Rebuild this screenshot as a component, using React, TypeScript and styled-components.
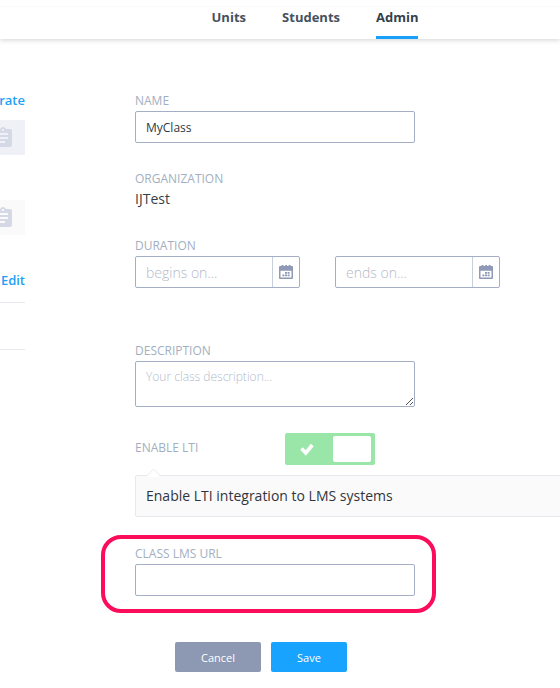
import React from "react";
import styled, { createGlobalStyle } from "styled-components";

const GlobalStyle = createGlobalStyle`
  * { box-sizing: border-box; }
  body { margin: 0; background: #fff; overflow: hidden; }
  body, input, textarea, button { font-family: "Open Sans", "Noto Sans", sans-serif; }
`;

const Page = styled.div`
  width: 560px;
  height: 688px;
  overflow: hidden;
  color: #373f49;
`;

const Header = styled.header`
  height: 39px;
  padding-top: 6px;
  background: linear-gradient(#fafafa, #fafafa) 0 6px / 100% 1px no-repeat #fff;
  box-shadow: 0 1px 5px rgba(0, 0, 0, 0.18);
`;

const Nav = styled.nav`
  display: flex;
  gap: 36px;
  padding-left: 211px;
`;

const NavItem = styled.a<{ $active?: boolean; $width: number }>`
  width: ${(p) => p.$width}px;
  height: 33px;
  border-bottom: 3px solid ${(p) => (p.$active ? "#18a0fb" : "transparent")};
  font-size: 13px;
  font-weight: 700;
  line-height: 23px;
  text-align: right;
  white-space: nowrap;
  color: ${(p) => (p.$active ? "#333f4d" : "#46515e")};
`;

const Body = styled.div`
  display: flex;
`;

const Sidebar = styled.aside`
  flex: none;
  width: 25px;
  height: 649px;
  overflow: hidden;
  padding-top: 51px;
`;

const SideLink = styled.a`
  display: flex;
  justify-content: flex-end;
  height: 20px;
  line-height: 20px;
  font-size: 13px;
  font-weight: 600;
  color: #229ff5;
`;

const Tile = styled.div<{ $active?: boolean }>`
  display: flex;
  height: 35px;
  margin-top: ${(p) => (p.$active ? 10 : 45)}px;
  padding-top: 7px;
  background: ${(p) => (p.$active ? "#f0f1f6" : "#fafafa")};
  svg { flex: none; margin-left: -6px; }
`;

const EditArea = styled.div`
  padding-top: 35px;
`;

const Rule = styled.hr<{ $gap: number }>`
  height: 1px;
  margin: ${(p) => p.$gap}px 0 0;
  border: 0;
  background: #e9eaf0;
`;

const Form = styled.form`
  flex: none;
  width: 425px;
  margin-left: 110px;
  padding-top: 54px;
`;

const Field = styled.div<{ $after?: number }>`
  width: 280px;
  margin-bottom: ${(p) => p.$after ?? 0}px;
`;

const Label = styled.label`
  display: block;
  height: 16px;
  margin-bottom: 2px;
  font-size: 12px;
  line-height: 16px;
  white-space: nowrap;
  color: #a3afc1;
`;

const Value = styled.div`
  height: 20px;
  font-size: 14px;
  line-height: 20px;
`;

const TextInput = styled.input`
  display: block;
  width: 100%;
  height: 32px;
  padding: 1px 10px 0;
  border: 1px solid #a4aec5;
  border-radius: 2px;
  outline: none;
  background: #fff;
  font-size: 12px;
  color: #303943;
`;

const Dates = styled.div`
  display: flex;
  gap: 35px;
  width: 365px;
`;

const DateBox = styled.div`
  display: flex;
  width: 165px;
  height: 32px;
  border: 1px solid #a4aec5;
  border-radius: 2px;
`;

const DateInput = styled.input`
  width: 136px;
  padding: 0 10px;
  border: 0;
  outline: none;
  background: transparent;
  font-size: 14px;
  font-weight: 300;
  &::placeholder { color: #b3bacb; opacity: 1; }
`;

const DateButton = styled.span`
  display: flex;
  align-items: center;
  justify-content: center;
  width: 27px;
  border-left: 1px solid #c9cedd;
`;

const AreaWrap = styled.div`
  position: relative;
  height: 46px;
  svg { position: absolute; right: 1px; bottom: 1px; }
`;

const Area = styled.textarea`
  display: block;
  width: 100%;
  height: 46px;
  padding: 6px 10px;
  border: 1px solid #a4aec5;
  border-radius: 2px;
  outline: none;
  resize: none;
  overflow: hidden;
  font-size: 12px;
  font-weight: 300;
  line-height: 18px;
  &::placeholder { color: #b3bacb; opacity: 1; }
`;

const ToggleRow = styled.div`
  display: flex;
  align-items: center;
  width: 240px;
  height: 32px;
  margin-bottom: 10px;
  justify-content: space-between;
`;

const Toggle = styled.div`
  display: flex;
  align-items: center;
  justify-content: space-between;
  width: 90px;
  height: 32px;
  padding: 0 4px 0 15px;
  border-radius: 2px;
  background: #9ae6a8;
`;

const Knob = styled.span`
  width: 38px;
  height: 26px;
  border-radius: 2px;
  background: #fff;
`;

const Hint = styled.div`
  position: relative;
  width: 440px;
  height: 42px;
  padding-left: 10px;
  border: 1px solid #e8e9ee;
  border-radius: 2px;
  background: #fafafa;
  font-size: 14px;
  line-height: 40px;
  color: #30353d;
  svg { position: absolute; left: 10px; top: -8px; }
`;

const Highlight = styled.div`
  width: 335px;
  height: 78px;
  margin: 18px 0 0 -34px;
  padding: 7px 17px 0 30px;
  border: 4px solid #fb0d5c;
  border-radius: 20px;
`;

const Actions = styled.div`
  display: flex;
  gap: 10px;
  padding: 29px 0 0 40px;
`;

const Button = styled.button<{ $primary?: boolean }>`
  width: ${(p) => (p.$primary ? 76 : 86)}px;
  height: 30px;
  padding: 0;
  border: 0;
  border-radius: 2px;
  background: ${(p) => (p.$primary ? "#18a3ff" : "#8d98b3")};
  color: #fff;
  font-size: 11px;
`;

const Clipboard = ({ hole }: { hole: string }) => (
  <svg width="18" height="20" viewBox="0 0 18 20">
    <path fill="#d5d9e6" d="M2 2h4.2a3 3 0 0 1 5.6 0H16a2 2 0 0 1 2 2v14a2 2 0 0 1-2 2H2a2 2 0 0 1-2-2V4a2 2 0 0 1 2-2z" />
    <path fill={hole} d="M8 2h2v2H8zM3 6h11v2H3zM3 10h11v2H3zM3 14h8v2H3z" />
  </svg>
);

const Calendar = () => (
  <svg width="14" height="14" viewBox="0 0 14 14">
    <path fill="#8f99b5" fillRule="evenodd" d="M1 1h1.5V0h2v1h1.7V0h1.8v1h1.7V0h2v1H13a1 1 0 0 1 1 1v11a1 1 0 0 1-1 1H1a1 1 0 0 1-1-1V2a1 1 0 0 1 1-1zm.5 4.7v6.8h11V5.700z" />
    <path fill="#8f99b5" d="M6 7h2v1.8H6zM8.600 7h2v1.8h-2zM3.400 9.400h2v1.800h-2zM6 9.400h2v1.800H6zM8.600 9.400h2v1.800h-2z" />
  </svg>
);

const DateField = ({ placeholder }: { placeholder: string }) => (
  <DateBox>
    <DateInput placeholder={placeholder} />
    <DateButton><Calendar /></DateButton>
  </DateBox>
);

export default function App() {
  return (
    <Page>
      <GlobalStyle />
      <Header>
        <Nav>
          <NavItem $width={35}>Units</NavItem>
          <NavItem $width={58}>Students</NavItem>
          <NavItem $width={42} $active>Admin</NavItem>
        </Nav>
      </Header>
      <Body>
        <Sidebar>
          <SideLink>rate</SideLink>
          <Tile $active><Clipboard hole="#f0f1f6" /></Tile>
          <Tile><Clipboard hole="#fafafa" /></Tile>
          <EditArea><SideLink>Edit</SideLink></EditArea>
          <Rule $gap={12} />
          <Rule $gap={46} />
        </Sidebar>
        <Form>
          <Field $after={28}>
            <Label>NAME</Label>
            <TextInput defaultValue="MyClass" />
          </Field>
          <Field $after={29}>
            <Label>ORGANIZATION</Label>
            <Value>IJTest</Value>
          </Field>
          <Field $after={55}>
            <Label>DURATION</Label>
            <Dates>
              <DateField placeholder="begins on..." />
              <DateField placeholder="ends on..." />
            </Dates>
          </Field>
          <Field $after={26}>
            <Label>DESCRIPTION</Label>
            <AreaWrap>
              <Area placeholder="Your class description..." />
              <svg width="9" height="9" viewBox="0 0 9 9" stroke="#555" fill="none">
                <path d="M1 8 8 1M5 8l3-3" />
              </svg>
            </AreaWrap>
          </Field>
          <ToggleRow>
            <Label>ENABLE LTI</Label>
            <Toggle>
              <svg width="14" height="13" viewBox="0 0 14 13" fill="none" stroke="#fff" strokeWidth="3.6">
                <path d="M1.5 5.5 5.8 10 12.3 2" />
              </svg>
              <Knob />
            </Toggle>
          </ToggleRow>
          <Hint>
            Enable LTI integration to LMS systems
            <svg width="15" height="9" viewBox="0 0 15 9">
              <path d="M1 8 7.5 1.5 14 8v1H1z" fill="#fff" />
              <path d="M.5 8 7.5 1l7 7" fill="none" stroke="#e8e9ee" />
            </svg>
          </Hint>
          <Highlight>
            <Field>
              <Label>CLASS LMS URL</Label>
              <TextInput />
            </Field>
          </Highlight>
          <Actions>
            <Button type="button">Cancel</Button>
            <Button type="button" $primary>Save</Button>
          </Actions>
        </Form>
      </Body>
    </Page>
  );
}
